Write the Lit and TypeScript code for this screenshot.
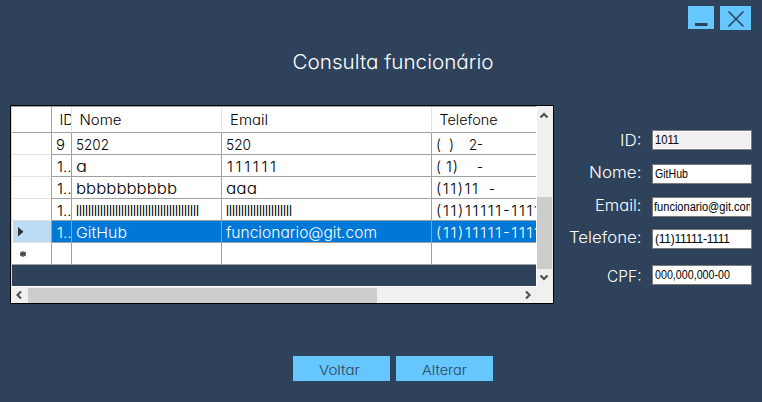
import { LitElement, html, css, svg, nothing } from "lit";
import { customElement } from "lit/decorators.js";

type Run = [text: string, x: number, width: number];

/** One line of text whose runs keep fixed advance widths. Runs of ones are spaced, not stretched. */
const line = (cls: string, width: number, height: number, baseline: number, runs: Run[]) => html`
  <svg class="line ${cls}" width=${width} height=${height}>
    ${runs.map(([t, x, w]) => svg`<text x=${x} y=${baseline} textLength=${w}
      lengthAdjust=${/^[(]?1[1)]/.test(t) ? "spacing" : "spacingAndGlyphs"}>${t}</text>`)}
  </svg>`;

interface Row { id: Run[]; nome: Run[]; email: Run[]; tel: Run[]; mark?: "current" | "new"; }

const rows: Row[] = [
  { id: [["9", 4, 9]], nome: [["5202", 4, 33]], email: [["520", 4, 25]], tel: [["(", 4, 5], [")", 17, 5], ["2-", 37, 14]] },
  { id: [["1..", 5, 14.5]], nome: [["a", 4, 11]], email: [["111111", 5, 49]], tel: [["(", 4, 5], ["1)", 14, 12], ["-", 45, 6]] },
  { id: [["1..", 5, 14.5]], nome: [["bbbbbbbbbb", 4, 101]], email: [["aaa", 4, 31]], tel: [["(11)11", 4, 42], ["-", 57, 6]] },
  { id: [["1..", 5, 14.5]], nome: [["l".repeat(41), 4, 123]], email: [["l".repeat(22), 4, 66]], tel: [["(11)11111-1111", 4, 104]] },
  { id: [["1..", 5, 14.5]], nome: [["GitHub", 4, 51]], email: [["funcionario@git.com", 4, 151]], tel: [["(11)11111-1111", 4, 104]], mark: "current" },
  { id: [], nome: [], email: [], tel: [], mark: "new" },
];

const fields = [
  { key: "id", label: "ID:", lw: 22, value: "1011", vw: 24 },
  { key: "nome", label: "Nome:", lw: 53, value: "GitHub", vw: 33 },
  { key: "email", label: "Email:", lw: 47, value: "funcionario@git.com", vw: 101 },
  { key: "tel", label: "Telefone:", lw: 73, value: "(11)11111-1111", vw: 75 },
  { key: "cpf", label: "CPF:", lw: 35, value: "000,000,000-00", vw: 75 },
];

const arrow = (d: string) => html`<svg class="arrow" width="10" height="10" viewBox="0 0 10 10"><path d=${d} /></svg>`;

@customElement("app-root")
export class AppRoot extends LitElement {
  static styles = css`
    :host { display: block; width: 762px; height: 402px; overflow: hidden; background: #2e425b;
      font-family: Inter, "Open Sans", sans-serif; font-feature-settings: "cv11"; font-weight: 300; }
    * { box-sizing: border-box; }
    .window { display: flex; flex-direction: column; height: 402px; }
    svg { display: block; flex: none; }
    .line { fill: currentColor; overflow: visible; }
    .bar { display: flex; justify-content: flex-end; gap: 6px; padding: 6px 11px 0 0; height: 30px; }
    .ctl { background: #66c7ff; width: 31px; height: 24px; }
    .ctl.min { width: 26px; height: 23px; }
    .title { margin: 19px 0 0 292px; height: 28px; color: #fff; font-size: 20px; }
    .main { display: flex; margin: 28px 0 0 10px; height: 199px; }
    .grid { width: 544px; height: 199px; border: 1px solid #000; display: grid; flex: none;
      grid-template-columns: 526px 16px; grid-template-rows: 181px 16px; background: #f0f0f0; }
    .table { overflow: hidden; border-top: 1px solid #a0a0a0; border-left: 1px solid #d8d8d8;
      border-bottom: 1px solid #fff; border-right: 1px solid #fff; background: #2e425b; }
    .row { display: grid; grid-template-columns: 40px 20px 150px 210px 105px; height: 22px; background: #fff; color: #000; font-size: 15px; width: 525px; }
    .cell { border-right: 1px solid #a0a0a0; border-bottom: 1px solid #a0a0a0; overflow: hidden; }
    .cell:last-child { border-right: 0; }
    .rh { border-bottom-color: #e3e3e3; display: flex; align-items: center; padding-left: 6px; }
    .row:last-child .rh { border-bottom-color: #a0a0a0; }
    .head { height: 26px; font-size: 14px; }
    .head .cell { border-right-color: #e3e3e3; }
    .head .rh { border-color: #a0a0a0; }
    .current { background: #0078d7; color: #fff; }
    .current .rh { background: #bcdcf4; border-left: 1px solid #fff; padding-left: 5px; }
    .bars { font-weight: 400; }
    .vs { display: flex; flex-direction: column; height: 181px; }
    .vthumb { width: 15px; height: 72px; background: #cdcdcd; margin-top: 75px; }
    .vs .arrow { margin-left: 2.3px; }
    .vs .arrow:first-child { margin-top: 5px; height: 11px; }
    .vs .arrow:last-child { margin-top: 3px; }
    .hs { display: flex; align-items: center; height: 16px; }
    .hs .arrow:first-child { margin-left: 3px; }
    .hthumb { width: 349px; height: 15px; background: #cdcdcd; margin: 0 146px 0 4px; }
    .arrow { fill: none; stroke: #4d4d4d; stroke-width: 2.1; }
    .form { display: flex; flex-direction: column; width: 198px; padding-top: 25px; }
    .field { display: flex; gap: 11px; height: 20px; justify-content: flex-end; flex: none; }
    .field + .field { margin-top: 14px; }
    .field.email { margin-top: 13px; }
    .field.tel { margin-top: 12px; }
    .field.cpf { margin-top: 16px; }
    .lab { color: #fff; font-size: 16px; }
    .box { width: 100px; height: 20px; border: 1px solid #7a7a7a; background: #fff; padding: 1px; color: #000;
      font: 400 12px "Liberation Sans", Arial, sans-serif; overflow: hidden; }
    .inner { overflow: hidden; height: 16px; }
    .id .inner { background: #f0f0f0; }
    .actions { display: flex; gap: 6px; margin: 52px 0 0 293px; }
    .btn { width: 97px; height: 25px; background: #66c7ff; color: #2e425b; font-size: 13px; }
  `;

  private row(r: Row) {
    const bars = r.nome[0]?.[0].startsWith("l") ? "bars" : "";
    return html`<div class="row ${r.mark === "current" ? "current" : ""}">
      <div class="cell rh">${r.mark === "current"
        ? html`<svg width="6" height="10"><path d="M0 0L5.5 4.8L0 9.6Z" fill="#333" /></svg>`
        : r.mark === "new"
          ? html`<svg width="10" height="8"><path d="M5 1V7M2.4 2L7.6 6M2.4 6L7.6 2M2 4H8" stroke="#444" stroke-width="1.3" /></svg>`
          : nothing}</div>
      <div class="cell">${line("", 19, 21, 17, r.id)}</div>
      <div class="cell">${line(bars, 149, 21, 17, r.nome)}</div>
      <div class="cell">${line(bars, 209, 21, 17, r.email)}</div>
      <div class="cell">${line("", 105, 21, 17, r.tel)}</div>
    </div>`;
  }

  render() {
    return html`<div class="window">
      <div class="bar">
        <div class="ctl min"><svg width="26" height="23"><path d="M7 18.5H19.5" stroke="#2e425b" stroke-width="3" /></svg></div>
        <div class="ctl"><svg width="31" height="24"><path d="M8.5 5.5L23.5 20.5M23.5 5.5L8.5 20.5" stroke="#2e425b" stroke-width="1.6" /></svg></div>
      </div>
      <div class="title">${line("", 210, 28, 20, [["Consulta funcionário", 0.5, 201]])}</div>
      <div class="main">
        <div class="grid">
          <div class="table">
            <div class="row head">
              <div class="cell rh"></div>
              <div class="cell">${line("", 19, 25, 18, [["ID", 7.5, 14.5]])}</div>
              <div class="cell">${line("", 149, 25, 18, [["Nome", 7.5, 42]])}</div>
              <div class="cell">${line("", 209, 25, 18, [["Email", 8, 38]])}</div>
              <div class="cell">${line("", 105, 25, 18, [["Telefone", 7.5, 58]])}</div>
            </div>
            ${rows.map((r) => this.row(r))}
          </div>
          <div class="vs">${arrow("M1.5 6L5 2.5L8.5 6")}<div class="vthumb"></div>${arrow("M1.5 3.5L5 7L8.5 3.5")}</div>
          <div class="hs">${arrow("M7 1.5L3.5 5L7 8.5")}<div class="hthumb"></div>${arrow("M3 1.5L6.5 5L3 8.5")}</div>
        </div>
        <div class="form">
          ${fields.map((f) => html`<div class="field ${f.key}">
            <div class="lab">${line("", f.lw, 20, f.key === "cpf" ? 17 : f.key === "id" ? 16 : 14, [[f.label, 1, f.lw - 0.5]])}</div>
            <div class="box"><div class="inner">${line("", 96, 16, 12, [[f.value, f.key === "email" ? 0 : 1, f.vw]])}</div></div>
          </div>`)}
        </div>
      </div>
      <div class="actions">
        <div class="btn">${line("", 97, 25, 19, [["Voltar", 26, 41]])}</div>
        <div class="btn">${line("", 97, 25, 19, [["Alterar", 26, 45]])}</div>
      </div>
    </div>`;
  }
}
